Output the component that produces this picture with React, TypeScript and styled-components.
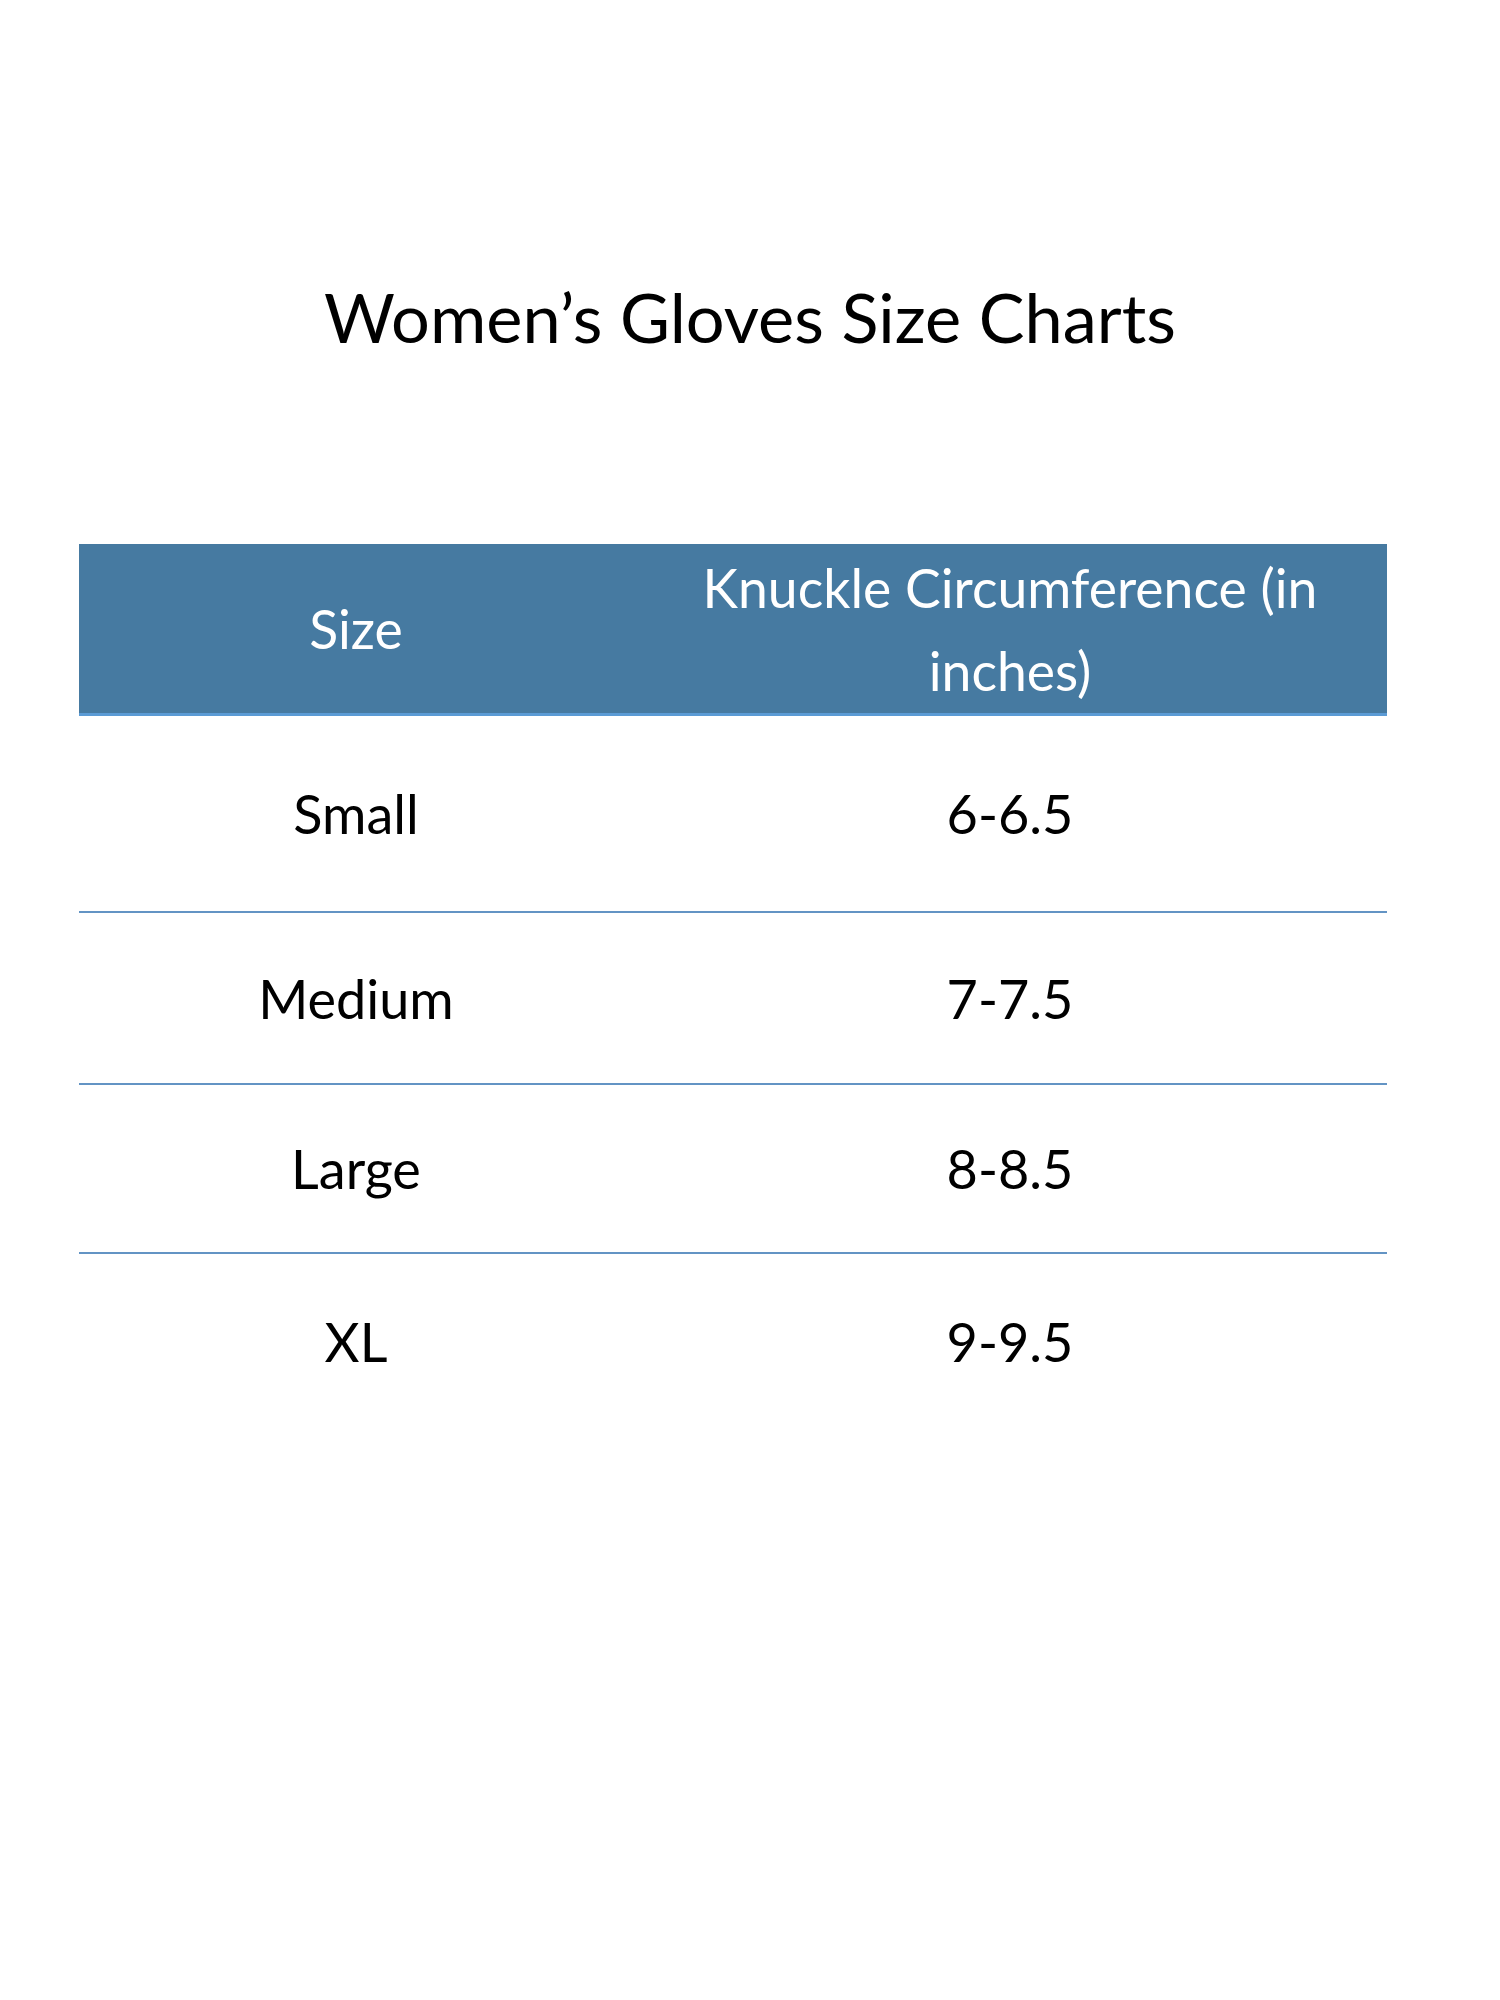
import React from "react";
import styled, { createGlobalStyle } from "styled-components";

const GlobalStyle = createGlobalStyle`
  html, body {
    margin: 0;
    padding: 0;
    background: #ffffff;
  }
  body {
    font-family: "Lato", "Open Sans", "DejaVu Sans", sans-serif;
    color: #000000;
  }
`;

const Page = styled.div`
  width: 1500px;
  min-height: 2000px;
  box-sizing: border-box;
  padding-top: 272px;
  display: flex;
  flex-direction: column;
  align-items: center;
`;

const Title = styled.h1`
  margin: 0;
  font-weight: 400;
  font-size: 68.5px;
  line-height: 90px;
  text-align: center;
`;

const Table = styled.div`
  margin-top: 182px;
  align-self: flex-start;
  margin-left: 79px;
  width: 1308px;
  display: grid;
  grid-template-columns: 554px 754px;
`;

const HeaderCell = styled.div`
  background: #467aa1;
  color: #ffffff;
  height: 169px;
  border-bottom: 3px solid #5b9bd5;
  display: flex;
  align-items: center;
  justify-content: center;
  text-align: center;
  padding: 0 60px;
  font-size: 53.5px;
  line-height: 83px;
`;

const Cell = styled.div<{ $h: number; $last?: boolean }>`
  height: ${(p) => p.$h}px;
  border-bottom: ${(p) => (p.$last ? "none" : "2px solid #6394c4")};
  display: flex;
  align-items: center;
  justify-content: center;
  text-align: center;
  font-size: 54px;
`;

const rows = [
  { size: "Small", value: "6-6.5", h: 195 },
  { size: "Medium", value: "7-7.5", h: 170 },
  { size: "Large", value: "8-8.5", h: 167 },
  { size: "XL", value: "9-9.5", h: 174 },
];

export default function App() {
  return (
    <>
      <GlobalStyle />
      <Page>
        <Title>Women’s Gloves Size Charts</Title>
        <Table>
          <HeaderCell>Size</HeaderCell>
          <HeaderCell>Knuckle Circumference (in inches)</HeaderCell>
          {rows.map((r, i) => (
            <React.Fragment key={r.size}>
              <Cell $h={r.h} $last={i === rows.length - 1}>{r.size}</Cell>
              <Cell $h={r.h} $last={i === rows.length - 1}>{r.value}</Cell>
            </React.Fragment>
          ))}
        </Table>
      </Page>
    </>
  );
}
